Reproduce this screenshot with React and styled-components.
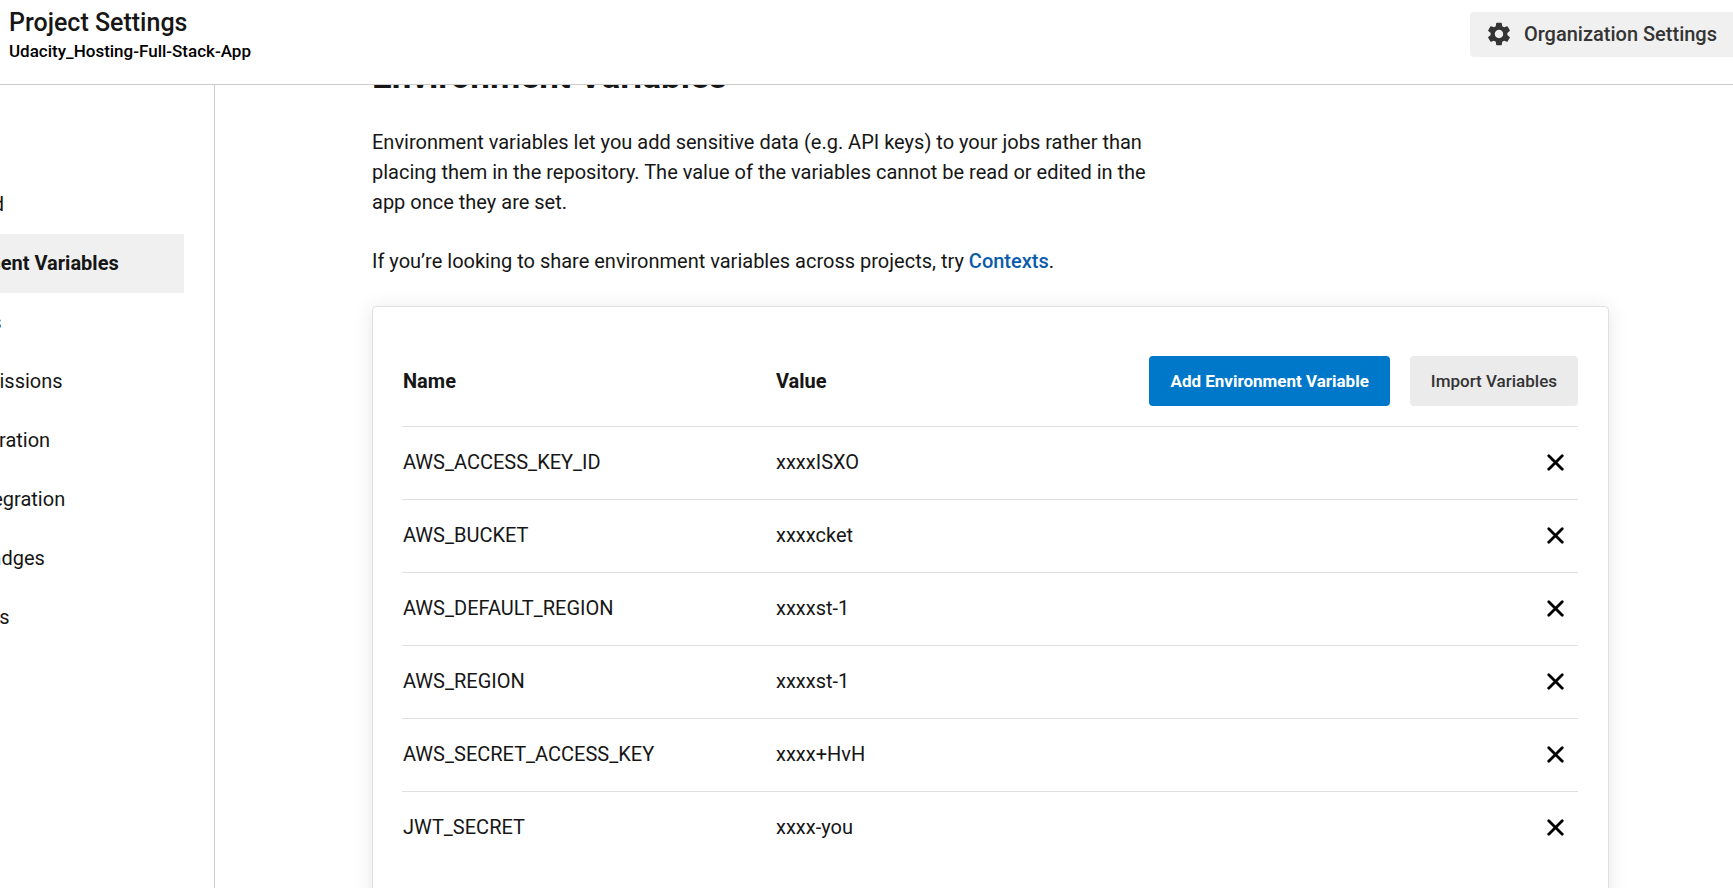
import React from "react";
import styled, { createGlobalStyle } from "styled-components";
import { MdSettings } from "react-icons/md";
import { X } from "lucide-react";

const GlobalStyle = createGlobalStyle`
  *, *::before, *::after { box-sizing: border-box; }
  body {
    margin: 0;
    background: #fff;
    color: #161616;
    font-family: Roboto, "Liberation Sans", sans-serif;
    font-size: 20px;
    line-height: 30px;
  }
  h1, h2, p, ul { margin: 0; padding: 0; }
  button { font-family: inherit; border: 0; cursor: pointer; }
`;

const Page = styled.div`
  display: flex;
  flex-direction: column;
  height: 100vh;
  overflow: hidden;
`;

const Header = styled.header`
  display: flex;
  justify-content: space-between;
  align-items: flex-start;
  flex: none;
  padding: 8px 0 20px 9px;
  border-bottom: 1px solid #ccc;
`;

const PageTitle = styled.h1`
  font-size: 25px;
  font-weight: 500;
  line-height: 30px;
`;

const ProjectName = styled.p`
  font-size: 17px;
  font-weight: 500;
  line-height: 26px;
  color: #000;
`;

const OrgSettingsLink = styled.a`
  display: flex;
  align-items: center;
  gap: 11px;
  margin-top: 4px;
  padding: 7px 16px 8px 15px;
  border-radius: 4px 0 0 4px;
  background: #f0f0f0;
  color: #343434;
  font-weight: 500;
  text-decoration: none;
`;

const Body = styled.div`
  display: flex;
  flex: 1;
  min-height: 0;
`;

const Sidebar = styled.nav`
  flex: none;
  width: 215px;
  padding: 90px 30px 0 0;
  border-right: 1px solid #ccc;
  overflow: hidden;
`;

const NavList = styled.ul`
  display: flex;
  flex-direction: column;
  margin-left: -108px;
  list-style: none;
`;

const NavLink = styled.a`
  display: block;
  padding: 14px 24px 15px;
  background: ${(p) => (p.$active ? "#f0f0f0" : "transparent")};
  color: #161616;
  font-weight: ${(p) => (p.$active ? 700 : 400)};
  text-decoration: none;
  white-space: nowrap;
`;

const Main = styled.main`
  flex: 1;
  min-width: 0;
  overflow: hidden;
  padding: 0 124px 0 157px;
`;

const SectionTitle = styled.h2`
  margin-top: -34px;
  font-size: 35px;
  font-weight: 700;
  line-height: 52px;
`;

const Intro = styled.div`
  display: flex;
  flex-direction: column;
  gap: 29px;
  max-width: 775px;
  margin-top: 24px;
`;

const ContextsLink = styled.a`
  color: #0b5cad;
  font-weight: 500;
  text-decoration: none;
`;

const Card = styled.section`
  margin-top: 30px;
  padding: 49px 30px 60px 29px;
  border: 1px solid #e0e0e0;
  border-radius: 4px;
  box-shadow: 0 2px 20px rgba(0, 0, 0, 0.1);
`;

const Table = styled.table`
  width: 100%;
  table-layout: fixed;
  border-collapse: separate;
  border-spacing: 0;
`;

const Column = styled.col`
  width: ${(p) => p.$width};
`;

const HeadCell = styled.th`
  padding: 0 0 20px 1px;
  font-weight: 700;
  text-align: left;
`;

const Row = styled.tr`
  & > td { border-top: 1px solid #e0e0e0; }
`;

const Cell = styled.td`
  height: 73px;
  padding: 0 1px 2px;
  text-align: ${(p) => p.$align || "left"};
`;

const Actions = styled.div`
  display: flex;
  justify-content: flex-end;
  gap: 20px;
`;

const Button = styled.button`
  padding: 10px 21px;
  border-radius: 4px;
  background: ${(p) => (p.$primary ? "#0078ca" : "#ebebeb")};
  color: ${(p) => (p.$primary ? "#fff" : "#343434")};
  font-size: 17px;
  font-weight: ${(p) => (p.$primary ? 700 : 500)};
  line-height: 30px;
  white-space: nowrap;
`;

const DeleteButton = styled.button`
  display: inline-flex;
  padding: 8px;
  background: transparent;
  color: #000;
  vertical-align: middle;
`;

const navItems = [
  "Advanced",
  "Environment Variables",
  "SSH Keys",
  "API Permissions",
  "Jira Integration",
  "Slack Integration",
  "Status Badges",
  "Webhooks",
];

const variables = [
  ["AWS_ACCESS_KEY_ID", "xxxxISXO"],
  ["AWS_BUCKET", "xxxxcket"],
  ["AWS_DEFAULT_REGION", "xxxxst-1"],
  ["AWS_REGION", "xxxxst-1"],
  ["AWS_SECRET_ACCESS_KEY", "xxxx+HvH"],
  ["JWT_SECRET", "xxxx-you"],
];

export default function App() {
  return (
    <>
      <GlobalStyle />
      <Page>
        <Header>
          <div>
            <PageTitle>Project Settings</PageTitle>
            <ProjectName>Udacity_Hosting-Full-Stack-App</ProjectName>
          </div>
          <OrgSettingsLink href="#organization">
            <MdSettings size={28} aria-hidden="true" />
            Organization Settings
          </OrgSettingsLink>
        </Header>
        <Body>
          <Sidebar aria-label="Project settings">
            <NavList>
              {navItems.map((item) => (
                <li key={item}>
                  <NavLink href="#settings" $active={item === "Environment Variables"}>
                    {item}
                  </NavLink>
                </li>
              ))}
            </NavList>
          </Sidebar>
          <Main>
            <SectionTitle>Environment Variables</SectionTitle>
            <Intro>
              <p>
                Environment variables let you add sensitive data (e.g. API keys) to your jobs
                rather than placing them in the repository. The value of the variables cannot be
                read or edited in the app once they are set.
              </p>
              <p>
                If you’re looking to share environment variables across projects, try{" "}
                <ContextsLink href="#contexts">Contexts</ContextsLink>.
              </p>
            </Intro>
            <Card>
              <Table>
                <colgroup>
                  <Column $width="373px" />
                  <Column $width="300px" />
                  <Column $width="auto" />
                </colgroup>
                <thead>
                  <tr>
                    <HeadCell scope="col">Name</HeadCell>
                    <HeadCell scope="col">Value</HeadCell>
                    <HeadCell as="td">
                      <Actions>
                        <Button type="button" $primary>Add Environment Variable</Button>
                        <Button type="button">Import Variables</Button>
                      </Actions>
                    </HeadCell>
                  </tr>
                </thead>
                <tbody>
                  {variables.map(([name, value]) => (
                    <Row key={name}>
                      <Cell>{name}</Cell>
                      <Cell>{value}</Cell>
                      <Cell $align="right">
                        <DeleteButton type="button" aria-label={`Delete ${name}`}>
                          <X size={27} strokeWidth={2.5} aria-hidden="true" />
                        </DeleteButton>
                      </Cell>
                    </Row>
                  ))}
                </tbody>
              </Table>
            </Card>
          </Main>
        </Body>
      </Page>
    </>
  );
}
